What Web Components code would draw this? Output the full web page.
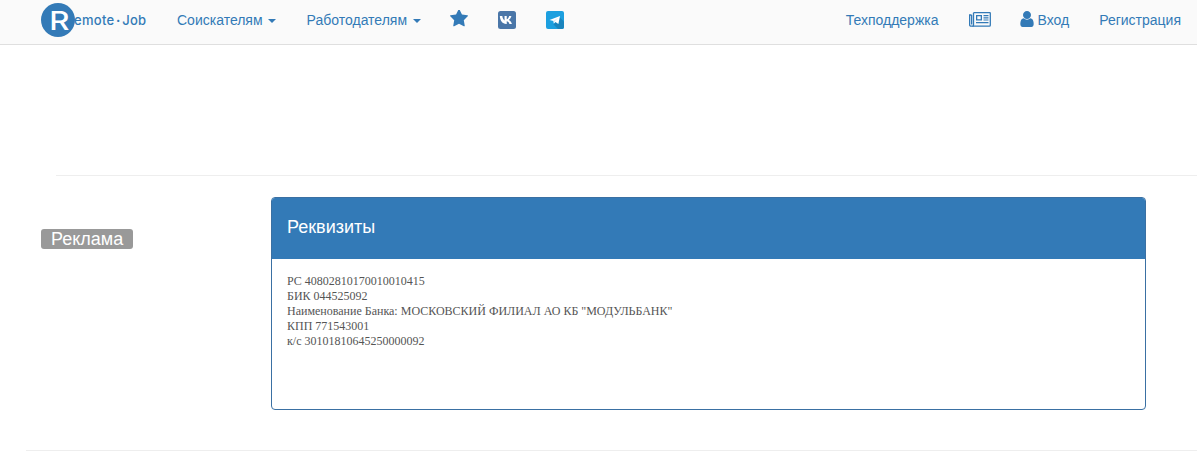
<!doctype html>
<html lang="ru">
<head>
<meta charset="utf-8">
<title>Реквизиты</title>
<style>
  html, body { margin: 0; padding: 0; background: #fff; }
  body { font: 14px/20px "Liberation Sans", Arial, sans-serif; color: #333; overflow: hidden; height: 456px; }
</style>
</head>
<body>
<site-page>
  <site-nav slot="nav"></site-nav>
  <ad-label slot="side">Реклама</ad-label>
  <info-panel slot="main" heading="Реквизиты">
    РС 40802810170010010415<br>
    БИК 044525092<br>
    Наименование Банка: МОСКОВСКИЙ ФИЛИАЛ АО КБ "МОДУЛЬБАНК"<br>
    КПП 771543001<br>
    к/с 30101810645250000092
  </info-panel>
</site-page>

<script>
const navTemplate = document.createElement('template');
navTemplate.innerHTML = `
<style>
  :host { display: flex; height: 44px; border-bottom: 1px solid #dfdfdf; background: #fafafa; justify-content: space-between; }
  .side { display: flex; align-items: flex-start; height: 44px; }
  .side.right { margin-right: 1px; }
  a { color: #337ab7; text-decoration: none; font-size: 14px; line-height: 20px; padding: 0 15px; display: flex; align-items: center; height: 40px; white-space: nowrap; }
  a.star { padding-left: 14px; }
  a.star svg { margin-bottom: 3px; }
  a.news { padding: 0 14px 0 16px; }
  a.news svg, .user { margin-bottom: 2px; }
  svg { display: block; }
  .caret { width: 0; height: 0; margin: 1px .4px 0 5.6px; border-top: 4px solid #337ab7; border-left: 4px solid transparent; border-right: 4px solid transparent; }
  .brand { display: flex; align-items: center; width: 121px; margin-left: 41px; height: 40px; }
  .circle { width: 34px; height: 34px; border-radius: 50%; background: #337ab7; flex: none; display: flex; align-items: center; justify-content: center; color: #fff; font: 500 26px/34px Inter, sans-serif; }
  .circle span { transform: translate(1px, 1px) scaleX(1.2); }
  .word { display: flex; font: 500 13px/20px Inter, sans-serif; color: #337ab7; margin-left: -1px; letter-spacing: .3px; white-space: nowrap; }
  .word i { font-style: normal; font-weight: 700; margin: 0 1.500px; }
  .user { margin-right: 3px; }
</style>
<div class="side">
  <div class="brand"><div class="circle"><span>R</span></div><div class="word">emote<i>·</i>Job</div></div>
  <a href="#">Соискателям<span class="caret"></span></a>
  <a href="#">Работодателям<span class="caret"></span></a>
  <a class="star" href="#" title="Избранное">
    <svg width="18" height="17" viewBox="64 128 1664 1536"><path fill="#337ab7" d="M1728 647q0 22-26 48l-363 354 86 500q1 7 1 20 0 21-10.500 35.500t-30.500 14.500q-19 0-40-12l-449-236-449 236q-22 12-40 12-21 0-31.500-14.500t-10.500-35.500q0-6 2-20l86-500-364-354q-25-27-25-48 0-37 56-46l502-73 225-455q19-41 49-41t49 41l225 455 502 73q56 9 56 46z"/></svg>
  </a>
  <a href="#" title="VK">
    <svg width="18" height="18" viewBox="0 0 18 18">
      <rect width="18" height="18" rx="2.500" fill="#4a76a8"/>
      <path fill="#fff" transform="translate(9 9) scale(1.3) translate(-8.500 -9)" d="M3 6h1.900c.1 1.500 1 2.900 1.700 3.300V6h1.700v2.500c.8-.1 1.500-1.200 1.900-2.500h1.700c-.3 1.500-1.300 2.600-2 3 .8.400 1.900 1.300 2.400 3h-1.900c-.4-1.100-1.200-1.900-2.100-2V12h-.4C5.100 12 3.200 9.900 3 6z"/>
    </svg>
  </a>
  <a href="#" title="Telegram">
    <svg width="18" height="18" viewBox="0 0 18 18">
      <rect width="18" height="18" rx="2" fill="#1c9fdf"/>
      <path fill="#1a84bd" d="M7.500 13.500 14 6.500 18 10.500V16a2 2 0 0 1-2 2h-4z"/>
      <path fill="#fff" d="M3.500 9 14 5l-1.600 8-3-2.100-1.500 1.700-.4-2.700z"/>
      <path fill="#d3e6f3" d="M7.500 9.900 12.500 6.500 8.500 10.400 7.900 12.600z"/>
    </svg>
  </a>
</div>
<div class="side right">
  <a href="#">Техподдержка</a>
  <a class="news" href="#" title="Новости">
    <svg width="22" height="15" viewBox="0 0 22 15" fill="none" stroke="#337ab7" stroke-width="1.300">
      <path d="M4.500 .7h16.300a.5.500 0 0 1 .5.500v12a1 1 0 0 1-1 1H2a1.400 1.400 0 0 1-1.400-1.400V3h2"/>
      <path d="M4.500 .7v12.600a1 1 0 0 1-1 1M2.600 3v9.500"/>
      <path fill="#337ab7" stroke="none" d="M7 3h6v5.500H7zM8.300 4.300v2.900h3.400V4.300zM14.500 3h5v1.200h-5zM14.500 5.200h5v1.200h-5zM14.500 7.400h5v1.200h-5zM7 10h12.500v1.200H7z"/>
    </svg>
  </a>
  <a href="#">
    <svg class="user" width="14" height="16" viewBox="256 128 1280 1536"><path fill="#337ab7" d="M1536 1399q0 109-62.500 187t-150.500 78h-854q-88 0-150.500-78t-62.500-187q0-85 8.500-160.500t31.500-152 58.500-131 94-89 134.500-34.500q131 128 313 128t313-128q76 0 134.500 34.500t94 89 58.500 131 31.500 152 8.500 160.500zm-256-887q0 159-112.500 271.500t-271.500 112.500-271.500-112.500-112.500-271.500 112.500-271.500 271.500-112.500 271.500 112.500 112.500 271.500z"/></svg>Вход
  </a>
  <a href="#">Регистрация</a>
</div>
`;

class SiteNav extends HTMLElement {
  constructor() {
    super();
    this.attachShadow({ mode: 'open' }).appendChild(navTemplate.content.cloneNode(true));
  }
}
customElements.define('site-nav', SiteNav);

const labelTemplate = document.createElement('template');
labelTemplate.innerHTML = `
<style>
  :host { display: inline-block; background: #999; color: #fff; border-radius: 3px; font: 18px/20px "Liberation Sans", Arial, sans-serif; padding: 0 10px; white-space: nowrap; }
</style>
<slot></slot>
`;

class AdLabel extends HTMLElement {
  constructor() {
    super();
    this.attachShadow({ mode: 'open' }).appendChild(labelTemplate.content.cloneNode(true));
  }
}
customElements.define('ad-label', AdLabel);

const panelTemplate = document.createElement('template');
panelTemplate.innerHTML = `
<style>
  :host { display: block; border: 1px solid #3a70a3; border-radius: 4px; height: 213px; box-sizing: border-box; background: #fff; overflow: hidden; }
  .heading { background: #337ab7; color: #fff; font: 18px/20px "Liberation Sans", Arial, sans-serif; padding: 19px 15px 22px; }
  .body { padding: 15px; font: 12px/15px "Liberation Serif", "Times New Roman", serif; color: #555; }
</style>
<div class="heading"></div>
<div class="body"><slot></slot></div>
`;

class InfoPanel extends HTMLElement {
  constructor() {
    super();
    this.attachShadow({ mode: 'open' }).appendChild(panelTemplate.content.cloneNode(true));
    this.shadowRoot.querySelector('.heading').textContent = this.getAttribute('heading');
  }
}
customElements.define('info-panel', InfoPanel);

const pageTemplate = document.createElement('template');
pageTemplate.innerHTML = `
<style>
  :host { display: block; width: 1197px; overflow: hidden; }
  .rule-top { height: 1px; background: #eee; margin: 130px 0 0 56px; }
  .columns { display: grid; grid-template-columns: 92px 875px; column-gap: 138px; padding: 21px 0 0 41px; }
  .side { padding-top: 32px; }
  .rule-bottom { height: 1px; background: #eee; margin: 40px 0 0 26px; }
</style>
<slot name="nav"></slot>
<div class="rule-top"></div>
<div class="columns">
  <div class="side"><slot name="side"></slot></div>
  <div><slot name="main"></slot></div>
</div>
<div class="rule-bottom"></div>
`;

class SitePage extends HTMLElement {
  constructor() {
    super();
    this.attachShadow({ mode: 'open' }).appendChild(pageTemplate.content.cloneNode(true));
  }
}
customElements.define('site-page', SitePage);
</script>
</body>
</html>
